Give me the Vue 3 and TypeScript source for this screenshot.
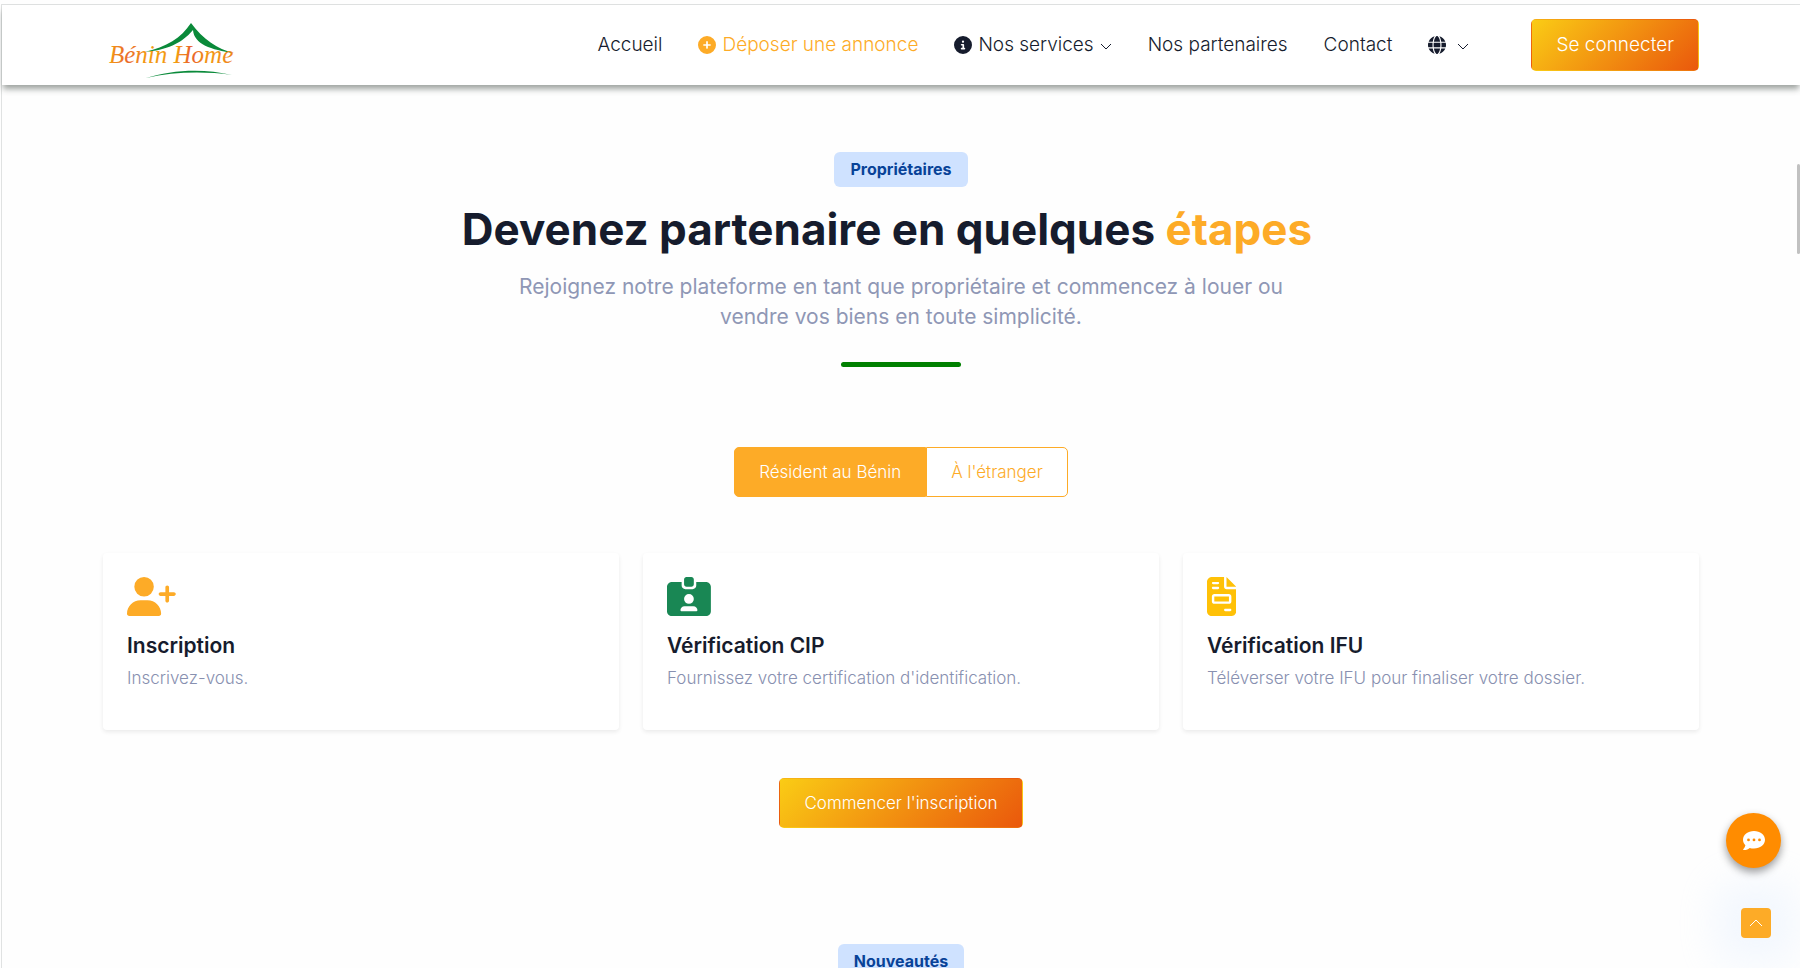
<script setup lang="ts">
import { ref } from 'vue'

interface Step {
  title: string
  text: string
  tone: string
  viewBox: string
  icon: string
}

type Residency = 'resident' | 'abroad'

const residency = ref<Residency>('resident')

const circlePlus =
  'M256 512A256 256 0 1 0 256 0a256 256 0 1 0 0 512zM232 344V280H168c-13.3 0-24-10.7-24-24s10.7-24 24-24h64V168c0-13.3 10.7-24 24-24s24 10.7 24 24v64h64c13.3 0 24 10.7 24 24s-10.7 24-24 24H280v64c0 13.3-10.7 24-24 24s-24-10.7-24-24z'
const circleInfo =
  'M256 512A256 256 0 1 0 256 0a256 256 0 1 0 0 512zM216 336h24V272H216c-13.3 0-24-10.7-24-24s10.7-24 24-24h48c13.3 0 24 10.7 24 24v88h8c13.3 0 24 10.7 24 24s-10.7 24-24 24H216c-13.3 0-24-10.7-24-24s10.7-24 24-24zm40-208a32 32 0 1 1 0 64 32 32 0 1 1 0-64z'
const globe =
  'M352 256c0 22.2-1.2 43.6-3.3 64H163.3c-2.2-20.4-3.3-41.8-3.3-64s1.2-43.6 3.3-64H348.7c2.2 20.4 3.3 41.8 3.3 64zm28.8-64H503.9c5.3 20.5 8.1 41.9 8.1 64s-2.8 43.5-8.1 64H380.8c2.1-20.6 3.2-42 3.2-64s-1.1-43.4-3.2-64zm112.6-32H376.7c-10-63.9-29.8-117.4-55.3-151.6c78.3 20.7 142 77.5 171.9 151.6zm-149.1 0H167.7c6.1-36.4 15.5-68.6 27-94.7c10.5-23.6 22.2-40.7 33.5-51.5C239.4 3.2 248.7 0 256 0s16.6 3.2 27.8 13.8c11.3 10.8 23 27.9 33.5 51.5c11.6 26 20.9 58.2 27 94.7zm-209 0H18.6C48.6 85.9 112.2 29.1 190.6 8.4C165.1 42.6 145.3 96.1 135.3 160zM8.1 192H131.2c-2.1 20.6-3.2 42-3.2 64s1.1 43.4 3.2 64H8.1C2.8 299.5 0 278.1 0 256s2.8-43.5 8.1-64zM194.7 446.6c-11.6-26-20.9-58.2-27-94.6H344.3c-6.1 36.4-15.5 68.6-27 94.6c-10.5 23.6-22.2 40.7-33.5 51.5C272.6 508.8 263.3 512 256 512s-16.6-3.2-27.8-13.8c-11.3-10.8-23-27.9-33.5-51.5zM135.3 352c10 63.9 29.8 117.4 55.3 151.6C112.2 482.9 48.6 426.1 18.6 352H135.3zm358.1 0c-30 74.1-93.6 130.9-171.9 151.6c25.5-34.2 45.2-87.7 55.3-151.6H493.4z'

const steps: Step[] = [
  {
    title: 'Inscription',
    text: 'Inscrivez-vous.',
    tone: 'orange',
    viewBox: '0 0 640 512',
    icon: 'M96 128a128 128 0 1 1 256 0A128 128 0 1 1 96 128zM0 482.3C0 383.8 79.8 304 178.3 304h91.4C368.2 304 448 383.8 448 482.3c0 16.4-13.3 29.7-29.7 29.7H29.7C13.3 512 0 498.7 0 482.3zM504 312V248H440c-13.3 0-24-10.7-24-24s10.7-24 24-24h64V136c0-13.3 10.7-24 24-24s24 10.7 24 24v64h64c13.3 0 24 10.7 24 24s-10.7 24-24 24H552v64c0 13.3-10.7 24-24 24s-24-10.7-24-24z',
  },
  {
    title: 'Vérification CIP',
    text: "Fournissez votre certification d'identification.",
    tone: 'green',
    viewBox: '0 0 576 512',
    icon: 'M256 0h64c17.7 0 32 14.3 32 32V96c0 17.7-14.3 32-32 32H256c-17.7 0-32-14.3-32-32V32c0-17.7 14.3-32 32-32zM64 64H192v48c0 26.5 21.5 48 48 48h96c26.5 0 48-21.5 48-48V64H512c35.3 0 64 28.7 64 64V448c0 35.3-28.7 64-64 64H64c-35.3 0-64-28.7-64-64V128C0 92.7 28.7 64 64 64zM176 437.3c0 5.9 4.8 10.7 10.7 10.7H389.3c5.9 0 10.7-4.8 10.7-10.7c0-29.5-23.9-53.3-53.3-53.3H229.3c-29.5 0-53.3 23.9-53.3 53.3zM288 352a64 64 0 1 0 0-128 64 64 0 1 0 0 128z',
  },
  {
    title: 'Vérification IFU',
    text: 'Téléverser votre IFU pour finaliser votre dossier.',
    tone: 'yellow',
    viewBox: '0 0 384 512',
    icon: 'M64 0C28.7 0 0 28.7 0 64V448c0 35.3 28.7 64 64 64H320c35.3 0 64-28.7 64-64V160H256c-17.7 0-32-14.3-32-32V0H64zM256 0V128H384L256 0zM80 64h64c8.8 0 16 7.2 16 16s-7.2 16-16 16H80c-8.8 0-16-7.2-16-16s7.2-16 16-16zm0 64h64c8.8 0 16 7.2 16 16s-7.2 16-16 16H80c-8.8 0-16-7.2-16-16s7.2-16 16-16zm16 96H288c17.7 0 32 14.3 32 32v64c0 17.7-14.3 32-32 32H96c-17.7 0-32-14.3-32-32V256c0-17.7 14.3-32 32-32zm0 32v64H288V256H96zM240 416h64c8.8 0 16 7.2 16 16s-7.2 16-16 16H240c-8.8 0-16-7.2-16-16s7.2-16 16-16z',
  },
]
</script>

<template>
  <div class="page">
    <header class="topbar">
      <div class="container topbar-inner">
        <a class="logo" href="#" aria-label="Bénin Home">
          <svg width="136" height="70" viewBox="0 -10 136 70">
            <defs>
              <linearGradient id="brand" x1="0" y1="0" x2="1" y2="0">
                <stop offset="0" stop-color="#f39a12" />
                <stop offset="0.15" stop-color="#ea6a2c" />
                <stop offset="0.3" stop-color="#f39a12" />
                <stop offset="0.55" stop-color="#f39a12" />
                <stop offset="0.66" stop-color="#e8602c" />
                <stop offset="0.8" stop-color="#f39a12" />
                <stop offset="1" stop-color="#ee8420" />
              </linearGradient>
            </defs>
            <path fill="#0a8a3a" d="M39 32C62 27 76 18 86 3C98 19 112 29 129 33C106 30 89 24 88 10C76 24 62 30 39 32z" />
            <path fill="#0a8a3a" d="M41 58C66 50 98 48 127 55C98 51 68 52 41 58z" />
            <text x="4" y="43" fill="url(#brand)" class="logo-text">Bénin Home</text>
          </svg>
        </a>
        <nav class="nav" aria-label="Navigation principale">
          <a href="#">Accueil</a>
          <a href="#" class="accent">
            <svg class="nav-icon" viewBox="0 0 512 512"><path :d="circlePlus" /></svg>
            Déposer une annonce
          </a>
          <a href="#">
            <svg class="nav-icon" viewBox="0 0 512 512"><path :d="circleInfo" /></svg>
            Nos services
            <svg class="chevron" viewBox="0 0 12 8"><path d="M1 1l5 5 5-5" /></svg>
          </a>
          <a href="#">Nos partenaires</a>
          <a href="#">Contact</a>
          <button type="button" class="lang" aria-label="Langue">
            <svg class="nav-icon" viewBox="0 0 512 512"><path :d="globe" /></svg>
            <svg class="chevron" viewBox="0 0 12 8"><path d="M1 1l5 5 5-5" /></svg>
          </button>
        </nav>
        <button type="button" class="cta login">Se connecter</button>
      </div>
    </header>

    <main class="container content">
      <span class="badge">Propriétaires</span>
      <h1>Devenez partenaire en quelques <span class="mark">étapes</span></h1>
      <p class="lead">
        Rejoignez notre plateforme en tant que propriétaire et commencez à louer ou<br />
        vendre vos biens en toute simplicité.
      </p>
      <div class="rule"></div>

      <div class="switch" role="group" aria-label="Lieu de résidence">
        <button type="button" :class="{ on: residency === 'resident' }" @click="residency = 'resident'">
          Résident au Bénin
        </button>
        <button type="button" :class="{ on: residency === 'abroad' }" @click="residency = 'abroad'">
          À l'étranger
        </button>
      </div>

      <section class="cards">
        <article v-for="step in steps" :key="step.title" class="card">
          <svg class="card-icon" :class="step.tone" :viewBox="step.viewBox"><path :d="step.icon" /></svg>
          <h2>{{ step.title }}</h2>
          <p>{{ step.text }}</p>
        </article>
      </section>

      <button type="button" class="cta start">Commencer l'inscription</button>

      <span class="badge next">Nouveautés</span>
    </main>

    <button type="button" class="to-top" aria-label="Haut de page">
      <svg width="14" height="8" viewBox="0 0 14 8"><path d="M1 7l6-6 6 6" fill="none" stroke="#fff" /></svg>
    </button>
    <button type="button" class="chat" aria-label="Discussion">
      <svg width="24" height="22" viewBox="0 0 24 22">
        <path
          fill="#fff"
          fill-rule="evenodd"
          d="M12 1C5.900 1 1 4.900 1 9.800c0 2.100.9 4 2.400 5.500C3 17 1.900 18.600 1.300 19.300c-.3.300-.1.800.4.800 2.800 0 4.900-1.300 6-2.200 1.300.5 2.800.7 4.300.7 6.100 0 11-3.900 11-8.800S18.100 1 12 1zM6.500 8.500a1.400 1.400 0 1 1 0 2.800 1.400 1.400 0 1 1 0-2.800zm5.500 0a1.400 1.400 0 1 1 0 2.800 1.400 1.400 0 1 1 0-2.800zm5.500 0a1.400 1.400 0 1 1 0 2.800 1.400 1.400 0 1 1 0-2.800z"
        />
      </svg>
    </button>
    <div class="thumb"></div>
  </div>
</template>

<style>
html {
  scrollbar-width: none;
}
body {
  background: #fefefe;
}
</style>

<style scoped>
.page {
  margin: 4px 0 0 1px;
  border-top: 1px solid #e0e2e2;
  border-left: 1px solid #e0e2e2;
  font-family: Inter, "Open Sans", "Liberation Sans", sans-serif;
  font-size: 17px;
  font-weight: 300;
  line-height: 24px;
  color: #161c2d;
}
.container {
  box-sizing: border-box;
  max-width: 1620px;
  margin: 0 auto;
  padding: 0 12px;
}
.topbar {
  position: relative;
  background: #fff;
  box-shadow: 0 5px 6px -1px rgba(40, 50, 45, 0.45);
}
.topbar-inner {
  display: flex;
  align-items: center;
  height: 80px;
}
.logo {
  display: flex;
  padding: 0 2px;
}
.logo-text {
  font-family: "Liberation Serif", serif;
  font-style: italic;
  font-weight: 400;
  font-size: 25px;
}
.nav {
  display: flex;
  align-items: center;
  gap: 36px;
  margin-left: auto;
  font-size: 19px;
}
.nav a,
.lang {
  display: flex;
  align-items: center;
  gap: 6px;
  color: inherit;
  text-decoration: none;
  white-space: nowrap;
}
.nav .accent {
  color: #fdab27;
}
.lang {
  gap: 11px;
  padding: 0;
  border: 0;
  background: none;
}
.nav-icon {
  width: 18px;
  height: 18px;
  fill: currentColor;
}
.chevron {
  width: 12px;
  height: 8px;
  margin-top: 4px;
  fill: none;
  stroke: currentColor;
}
.cta {
  height: 50px;
  padding: 0 24px;
  border: 1px solid transparent;
  border-radius: 5px;
  background-image: linear-gradient(135deg, #facc15, #ea580c);
  font: inherit;
  color: #fff;
}
.login {
  height: 52px;
  margin-left: 62px;
  font-size: 19px;
}
.content {
  display: flex;
  flex-direction: column;
  align-items: center;
  padding-top: 67px;
}
.badge {
  padding: 5px 16px 6px;
  border-radius: 6px;
  background: #cfe2ff;
  font-size: 16px;
  font-weight: 700;
  color: #084298;
}
h1 {
  margin: 12px 0 0;
  padding-right: 28px;
  font-size: 44px;
  font-weight: 650;
  line-height: 60px;
}
.mark {
  color: #fdab27;
}
.lead {
  margin: 13px 0 0;
  font-size: 21px;
  font-weight: 400;
  line-height: 30px;
  text-align: center;
  color: #8f97b5;
}
.rule {
  width: 120px;
  height: 5px;
  margin-top: 30px;
  border-radius: 3px;
  background: green;
}
.switch {
  display: flex;
  margin-top: 80px;
}
.switch button {
  height: 50px;
  padding: 0 24px;
  border: 1px solid #fdab27;
  background: #fff;
  font: inherit;
  color: #fdab27;
}
.switch button:first-child {
  border-radius: 5px 0 0 5px;
}
.switch button:last-child {
  border-radius: 0 5px 5px 0;
}
.switch .on {
  background: #fdab27;
  color: #fff;
}
.cards {
  display: grid;
  grid-template-columns: repeat(3, 1fr);
  gap: 24px;
  align-self: stretch;
  margin-top: 56px;
}
.card {
  padding: 24px 24px 39px;
  border-radius: 4px;
  background: #fff;
  box-shadow: 0 2px 4px rgba(0, 0, 0, 0.08);
}
.card-icon {
  display: block;
  height: 39px;
  fill: currentColor;
}
.orange {
  color: #fdab27;
}
.green {
  color: #198754;
}
.yellow {
  color: #ffc107;
}
.card h2 {
  margin: 16px 0 5px;
  font-size: 21px;
  font-weight: 600;
  line-height: 28px;
}
.card p {
  margin: 0;
  line-height: 26px;
  color: #8890b0;
}
.start {
  margin-top: 48px;
}
.next {
  margin-top: 116px;
}
.chat {
  position: fixed;
  right: 19px;
  bottom: 100px;
  display: grid;
  place-items: center;
  width: 55px;
  height: 55px;
  border: 0;
  border-radius: 50%;
  background: #ff8c00;
  box-shadow: 0 4px 8px rgba(0, 0, 0, 0.4);
}
.to-top {
  position: fixed;
  right: 29px;
  bottom: 30px;
  display: grid;
  place-items: center;
  width: 30px;
  height: 30px;
  padding: 0;
  border: 0;
  border-radius: 4px;
  background: #fdab27;
  box-shadow: 0 0 40px 25px rgba(225, 238, 255, 0.4);
}
.thumb {
  position: fixed;
  top: 164px;
  right: 0;
  width: 3px;
  height: 90px;
  border-radius: 2px;
  background: #c1c1c1;
}
</style>
